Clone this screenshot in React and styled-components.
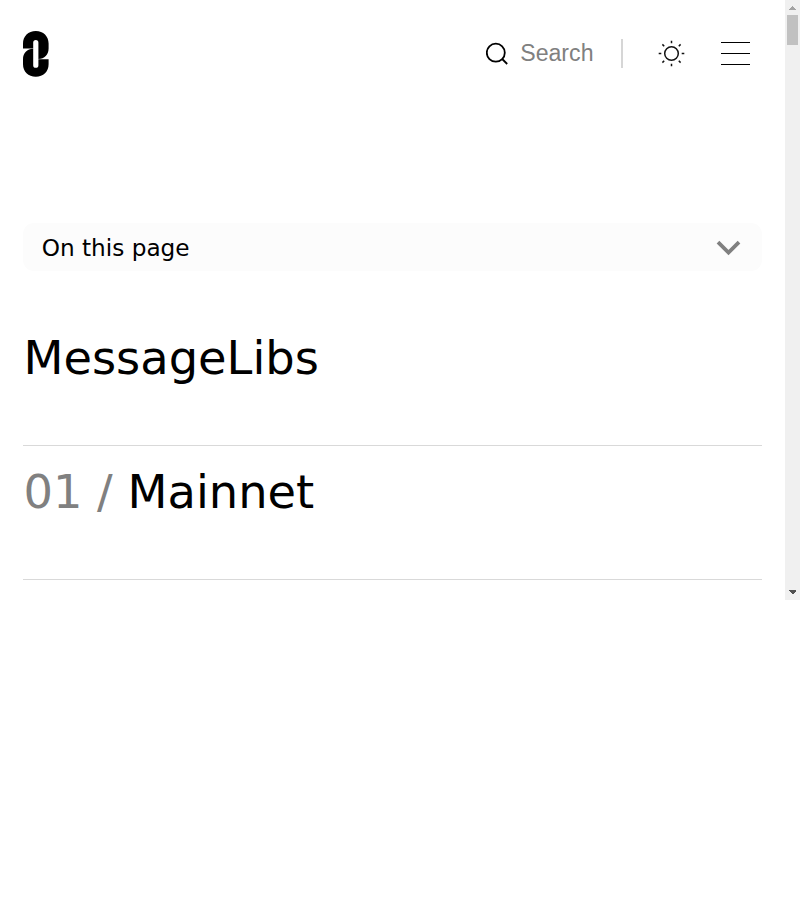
import React from "react";
import styled, { createGlobalStyle } from "styled-components";

const GlobalStyle = createGlobalStyle`
  * { box-sizing: border-box; }
  body { margin: 0; background: #fff; color: #000; font-family: "DejaVu Sans", sans-serif; }
`;

const Viewport = styled.div`
  display: flex;
  width: 800px;
  height: 600px;
  overflow: hidden;
`;

const Page = styled.div`
  flex: 1;
  min-width: 0;
  padding: 0 23px;
`;

const Header = styled.header`
  display: flex;
  align-items: center;
  justify-content: space-between;
  height: 107px;
`;

const Logo = styled.svg`
  display: block;
  width: 26px;
  height: 46px;
`;

const Tools = styled.div`
  display: flex;
  align-items: center;
  padding-right: 12px;
`;

const SearchButton = styled.button`
  display: flex;
  align-items: center;
  gap: 11px;
  padding: 0;
  border: 0;
  background: none;
  color: #808080;
  font: 23.14px/30px "Liberation Sans", sans-serif;
`;

const SearchLabel = styled.span`
  padding-bottom: 2px;
`;

const Divider = styled.span`
  width: 2px;
  height: 29px;
  margin-left: 27.5px;
  background: #d6d6d6;
`;

const IconButton = styled.button`
  display: flex;
  padding: 0;
  border: 0;
  margin-left: ${(p) => p.$gap}px;
  background: none;
  color: #000;
`;

const MenuLines = styled.span`
  display: flex;
  flex-direction: column;
  justify-content: space-between;
  width: 29px;
  height: 23px;
`;

const MenuLine = styled.span`
  height: 1px;
  background: #000;
`;

const PageNav = styled.button`
  display: flex;
  align-items: center;
  justify-content: space-between;
  width: 100%;
  height: 48px;
  margin-top: 116px;
  padding: 1px 21px 0 18.7px;
  border: 0;
  border-radius: 11px;
  background: #fcfcfc;
  color: #000;
  font: 23.2px/32px "DejaVu Sans", sans-serif;
`;

const Title = styled.h1`
  height: 116px;
  margin: 58px 0 0;
  padding-left: 0.4px;
  font-size: 46.36px;
  font-weight: 400;
  line-height: 58px;
`;

const Section = styled.section`
  height: 134px;
  padding: 17px 0 0 0.4px;
  border-top: 1px solid #d9d9d9;
`;

const SectionTitle = styled.h2`
  margin: 0;
  font-size: 46.36px;
  font-weight: 400;
  line-height: 58px;
`;

const Count = styled.span`
  color: #808080;
`;

const ScrollTrack = styled.div`
  display: flex;
  flex-direction: column;
  align-items: center;
  justify-content: space-between;
  width: 15px;
  background: #f0f0f0;
`;

const ScrollThumb = styled.div`
  width: 11px;
  height: 30px;
  margin-bottom: auto;
  background: #c1c1c1;
`;

const Arrow = styled.svg`
  display: block;
  width: 15px;
  height: 15px;
`;

export default function App() {
  return (
    <>
      <GlobalStyle />
      <Viewport>
        <Page>
          <Header>
            <Logo viewBox="0 0 26 46" aria-label="Home">
              <path d="M0 17.4V12.5C0 5.3 5.2 0 12.8 0S25.6 5.3 25.6 12.5V17.5C25.6 23.6 21.5 28 15.4 28V11.5a2.6 2.6 0 0 0-5.2 0V17.4Z" />
              <path d="M25.6 28.3V33.2C25.6 40.5 20.4 45.7 12.8 45.7S0 40.5 0 33.2V28.2C0 22.1 4.1 17.7 10.2 17.7V34.2a2.6 2.6 0 0 0 5.2 0V28.3Z" />
            </Logo>
            <Tools>
              <SearchButton>
                <svg width="23" height="24" viewBox="0 0 23 24" fill="none" stroke="#000" strokeWidth="1.8">
                  <circle cx="9.8" cy="10.7" r="9" />
                  <path d="M16.2 17 21.2 22" />
                </svg>
                <SearchLabel>Search</SearchLabel>
              </SearchButton>
              <Divider />
              <IconButton $gap={34} aria-label="Theme">
                <svg width="29" height="29" viewBox="0 0 29 29" fill="none" stroke="#111" strokeWidth="1.5">
                  <circle cx="14.5" cy="14.5" r="6.8" />
                  <path d="M14.5 1.7V4.3M14.5 24.7V27.3M1.7 14.5H4.3M24.7 14.5H27.3M5.4 5.4 7.2 7.2M21.8 21.8l1.8 1.8M5.4 23.6l1.8-1.8M21.8 7.2l1.8-1.8" />
                </svg>
              </IconButton>
              <IconButton $gap={35} aria-label="Menu">
                <MenuLines>
                  <MenuLine />
                  <MenuLine />
                  <MenuLine />
                </MenuLines>
              </IconButton>
            </Tools>
          </Header>
          <PageNav>
            On this page
            <svg width="25" height="16" viewBox="0 0 25 16" fill="none" stroke="#808080" strokeWidth="3.8">
              <path d="M2 2.2 12.5 12.5 23 2.2" />
            </svg>
          </PageNav>
          <Title>MessageLibs</Title>
          <Section>
            <SectionTitle>
              <Count>01 / </Count>Mainnet
            </SectionTitle>
          </Section>
          <Section />
        </Page>
        <ScrollTrack>
          <Arrow viewBox="0 0 15 15" fill="#a3a3a3" shapeRendering="crispEdges">
            <path d="M4 10 7.5 6 11 10Z" />
          </Arrow>
          <ScrollThumb />
          <Arrow viewBox="0 0 15 15" fill="#505050" shapeRendering="crispEdges">
            <path d="M4 5H11V6L7.5 9.5 4 6Z" />
          </Arrow>
        </ScrollTrack>
      </Viewport>
    </>
  );
}
